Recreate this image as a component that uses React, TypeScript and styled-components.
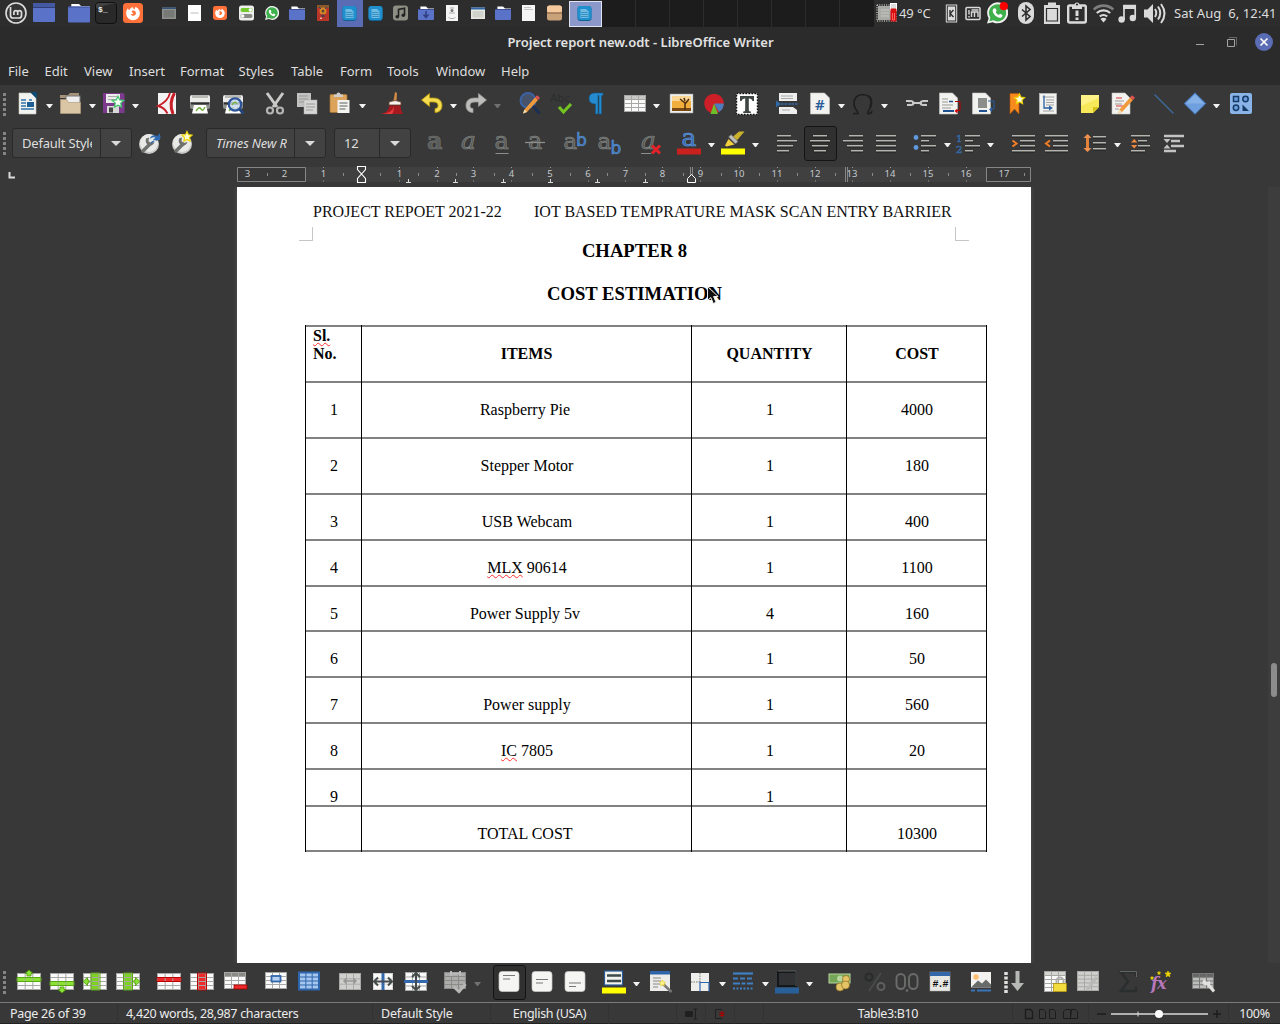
import React from 'react';
import styled, { createGlobalStyle } from 'styled-components';

const Global = createGlobalStyle`
  * { box-sizing: border-box; }
  body { margin: 0; background: #383838; overflow: hidden; }
`;

const ui = `"Noto Sans", "Open Sans", sans-serif`;

const Desktop = styled.div`
  width: 1280px;
  height: 1024px;
  display: flex;
  flex-direction: column;
  background: #383838;
  color: #dedede;
  font-family: ${ui};
  font-size: 13px;
  position: relative;
  overflow: hidden;
`;

/* ---------- desktop panel ---------- */

const Panel = styled.header`
  display: flex;
  height: 27px;
  flex: none;
  background: #2d2d2d;
  padding-left: 4px;
`;
const PanelIcon = styled.svg<{ $gap?: number }>`
  flex: none;
  display: block;
  height: 27px;
  margin-left: ${p => p.$gap ?? 0}px;
`;
const ActiveTask = styled.div`
  width: 26px;
  height: 27px;
  flex: none;
  background: #5a6db4;
  margin-left: 8px;
  padding-left: 5px;
`;
const FocusedTask = styled.div`
  width: 33px;
  height: 26px;
  flex: none;
  margin: 1px 0 0 7px;
  background: #8d98ca;
  border: 1px solid #dfe2f0;
  display: flex;
  padding-left: 7px;
  svg { margin-top: -2px; }
`;
const EmptyTasks = styled.div`
  display: flex;
  width: 272px;
  flex: none;
  background: #1c1c1c;
`;
const EmptyTask = styled.div`
  width: 34px;
  border-right: 1px solid #2c2c2c;
  &:last-child { border: 0; }
`;
const PanelText = styled.span<{ $gap: number; $w: number; $ls?: number }>`
  margin-left: ${p => p.$gap}px;
  width: ${p => p.$w}px;
  flex: none;
  line-height: 27px;
  font-size: 13px;
  letter-spacing: ${p => p.$ls ?? 0}px;
  white-space: pre;
`;

type PI = { w: number; gap?: number; children?: React.ReactNode };
const P = ({ w, gap, children }: PI) => (
  <PanelIcon $gap={gap} width={w} viewBox={`0 0 ${w} 27`}>{children}</PanelIcon>
);

const Folder = ({ w, h, gap, top, arrow }: { w: number; h: number; gap: number; top: number; arrow?: boolean }) => (
  <P w={w} gap={gap}>
    <path d={`M${w * 0.15} ${top + 4}v-3.5h${w * 0.35}l2 2h${w * 0.4}v3z`} fill="#fff" />
    <rect y={top + 3} width={w} height={h - 3} rx="1" fill="#5a72c8" />
    <rect y={top + 3} width={w} height="1" fill="#3c4f96" />
    {arrow && <path d={`M8 ${top + 5}v6M5.5 ${top + 8.5}l2.500 3 2.500-3`} stroke="#2f3f80" strokeWidth="1.500" fill="none" />}
  </P>
);
const Firefox = ({ s, gap }: { s: number; gap: number }) => (
  <P w={s} gap={gap}>
    <g transform={`translate(0 ${13 - s / 2}) scale(${s / 20})`}>
      <rect width="20" height="20" rx="3.500" fill="#ff7139" />
      <path d="M9 4.200c1.200.4 1.700 1.200 1.900 2.200 1.300-.4 1.500-1.500 1.300-2.600 2.800 1.200 4.700 3.400 4.700 6.500a6.900 6.900 0 0 1-13.800 0c0-2 .7-3.800 1.900-5 .2 1 .6 1.600 1.300 2 .6-1.400 1.400-2.400 2.700-3.100z" fill="#fff" />
      <path d="M9 7.800c-.6 1.300.2 2 1.500 2.200-.5 1.200-1.700 1.200-2.600.8.3 1.600 1.500 2.300 2.900 2 1.500-.3 2.300-1.500 2.100-3-.2-1.500-1.500-2.700-3.900-2z" fill="#ff7139" />
    </g>
  </P>
);
const WhatsApp = ({ s, gap, dot }: { s: number; gap: number; dot?: boolean }) => (
  <P w={s} gap={gap}>
    <g transform={`translate(0 ${13 - s / 2}) scale(${s / 20})`}>
      <path d="M0 20l1.600-5A10 10 0 1 1 5.500 18.700z" fill="#f2f2f2" />
      <path d="M2.200 17.800l1-3.400A8.200 8.200 0 1 1 6 17z" fill="#3fb14c" />
      <path d="M6.800 5.400l1.400.2 1 2.200-1 1.300c.7 1.400 1.700 2.200 3 2.800l1.200-1.200 2.300 1.100c.2 1.600-1 2.700-2.500 2.700-3.500-.4-6.500-3.600-6.800-6.600 0-1 .5-2 1.400-2.500z" fill="#fff" />
      {dot && <circle cx="16" cy="3.500" r="3.900" fill="#f00" />}
    </g>
  </P>
);
const WriterIcon = ({ gap }: { gap?: number }) => (
  <P w={15} gap={gap}>
    <rect x=".5" y="6" width="14" height="15" rx="3" fill="#14618f" />
    <rect x=".5" y="6" width="14" height="14" rx="3" fill="#1f8fce" />
    <path d="M3.500 9h5.500l2.500 2.500v6.500h-8z" fill="#6fbbe3" />
    <path d="M4 12.500h6.500M4 14.500h7M4 16.500h7" stroke="#2c87ba" strokeWidth=".8" />
  </P>
);
const Note = ({ w, gap, c, bg }: { w: number; gap: number; c: string; bg?: string }) => (
  <P w={w} gap={gap}>
    {bg ? (
      <>
        <rect y="5.500" width="15" height="15" rx="3" fill={bg} />
        <path d="M5.500 16.500V9.500l6-1.300v7" stroke={c} strokeWidth="1.600" fill="none" />
        <circle cx="4.300" cy="16.700" r="1.800" fill={c} /><circle cx="10.300" cy="15.300" r="1.800" fill={c} />
      </>
    ) : (
      <>
        <path d="M6 20V5.500h11.200V18" stroke={c} strokeWidth="1.700" fill="none" />
        <path d="M5.200 5h12.800v4H5.200z" fill={c} />
        <circle cx="3.600" cy="19.500" r="3.200" fill={c} /><circle cx="14.800" cy="18" r="3.200" fill={c} />
      </>
    )}
  </P>
);

const DesktopPanel = () => (
  <Panel>
    <P w={23}>
      <circle cx="12" cy="13" r="10" fill="#343434" stroke="#dcdcdc" strokeWidth="1.600" />
      <path d="M6.500 7v8.500a2.500 2.500 0 0 0 2.500 2.500h6a2.500 2.500 0 0 0 2.500-2.500V12a2 2 0 0 0-3.800 0v3M13.700 15v-3a2 2 0 0 0-3.800 0v3" stroke="#dcdcdc" strokeWidth="1.700" fill="none" />
    </P>
    <P w={22} gap={6}>
      <rect y="3" width="22" height="19" rx="1" fill="#5a72c8" /><rect y="3" width="22" height="4" fill="#4559a2" /><path d="M0 7.500h22" stroke="#2f3e78" />
    </P>
    <Folder w={22} h={19} gap={13} top={3.500} />
    <P w={22} gap={5}>
      <rect x=".5" y="2.500" width="21" height="21" rx="3.500" fill="#292929" stroke="#101010" />
      <path d="M1 8q10-3 20-5v-0H4Q1 3 1 6z" fill="#414141" />
      <text x="3" y="11.500" fontSize="8" fontWeight="700" fontFamily="Liberation Mono, monospace" fill="#eee">$_</text>
    </P>
    <Firefox s={20} gap={6} />
    <P w={14} gap={19}>
      <rect y="7.500" width="14" height="11.500" fill="#8f918e" /><rect x="1.500" y="10" width="11" height="7.500" fill="#777976" /><rect y="7.500" width="14" height="1.500" fill="#33557d" />
    </P>
    <P w={13} gap={12}><rect y="5" width="13" height="16" fill="#fff" /><path d="M2.500 13h8" stroke="#bbb" /></P>
    <Firefox s={14} gap={12} />
    <P w={15} gap={12}>
      <rect y="5.500" width="15" height="15" rx="2.500" fill="#eeeeec" />
      <rect x="1.500" y="8" width="12" height="4" rx="2" fill="#73c92d" /><circle cx="11.300" cy="10" r="1.700" fill="#fff" />
      <rect x="1.500" y="14" width="12" height="4" rx="2" fill="#878a85" /><circle cx="3.700" cy="16" r="1.700" fill="#fff" />
    </P>
    <WhatsApp s={14} gap={11} />
    <Folder w={16} h={14} gap={10} top={6} />
    <P w={12} gap={12}>
      <rect y="5" width="12" height="16" fill="#b93528" /><rect y="5" width="12" height="3" fill="#8b5a2b" /><circle cx="6" cy="11" r="3.500" fill="#d88726" /><circle cx="6" cy="11" r="1.500" fill="#5b4a33" /><path d="M2 7l2 2M10 7l-2 2M4 16h4M6 14v3" stroke="#3b3c62" /><rect x="3" y="17.500" width="2" height="1.500" fill="#f7b0a0" />
    </P>
    <ActiveTask><WriterIcon /></ActiveTask>
    <WriterIcon gap={5} />
    <Note w={15} gap={10} c="#222" bg="#8d8e84" />
    <Folder w={16} h={14} gap={10} top={6} arrow />
    <P w={12} gap={12}><rect y="5" width="12" height="16" fill="#f4f4f4" /><circle cx="6" cy="10.500" r="1.500" fill="#777" /><path d="M4 8h4M3 13h6M2.500 17l1.500 1.500h4L9.500 17" stroke="#aaa" fill="none" /></P>
    <P w={14} gap={13}><rect y="7.500" width="14" height="11.500" fill="#e8e9e5" /><rect y="7.500" width="14" height="2" fill="#2d65a5" /><rect x="1.500" y="11" width="11" height="6.500" fill="#cfd3cb" /></P>
    <Folder w={16} h={14} gap={10} top={6} />
    <P w={13} gap={11}><rect y="5" width="13" height="16" fill="#f6f6f6" /><path d="M2 7.500h7M2 9.500h9" stroke="#c5c5c5" /></P>
    <P w={15} gap={12}><rect y="5.500" width="15" height="15" rx="2.500" fill="#caa27a" /><rect y="5.500" width="15" height="7" rx="2.500" fill="#f3c99d" /><path d="M0 13h15" stroke="#7d5c3c" /></P>
    <FocusedTask><WriterIcon /></FocusedTask>
    <EmptyTasks>{Array.from({ length: 8 }, (_, i) => <EmptyTask key={i} />)}</EmptyTasks>
    <P w={22} gap={2}>
      <rect x="1" y="5" width="19" height="16" fill="none" stroke="#b9bab6" strokeDasharray="1 1.300" strokeWidth="1.500" />
      <rect x="2" y="6" width="16" height="14" fill="#a9aaa5" /><path d="M5 10h8M5 13h8M5 16h8" stroke="#c7c8c3" />
      <rect x="14.500" y="3.500" width="6" height="7" fill="#ddd" stroke="#fff" /><rect x="14.500" y="8.500" width="6" height="13" rx="1" fill="#d80f10" /><path d="M16.500 13v7h2v-7" stroke="#ff6262" fill="none" />
    </P>
    <PanelText $gap={1} $w={38} $ls={-0.1}>49 °C</PanelText>
    <P w={13} gap={8}><rect x=".8" y="4.500" width="11.400" height="18" fill="#dadada" /><rect x="2.300" y="6" width="8.400" height="15" fill="#dadada" stroke="#2d2d2d" /><path d="M5 10v7M8.500 10L5.200 13.500 8.500 17" stroke="#2d2d2d" strokeWidth="1.400" fill="none" /></P>
    <P w={16} gap={7}><rect x="1" y="7.500" width="14" height="12" rx="1" fill="none" stroke="#dadada" strokeWidth="1.500" /><path d="M4 10v4.500M4 16v1.500M6.500 17v-5h3v5M9.500 12h3.500v5M6.500 10h7" stroke="#dadada" strokeWidth="1.400" fill="none" /></P>
    <WhatsApp s={21} gap={6} dot />
    <P w={16} gap={10}><rect y="2" width="16" height="22" rx="8" fill="#dadada" /><path d="M4 9.500l8 7L8 20V6l4 3.500-8 7" stroke="#2d2d2d" strokeWidth="1.600" fill="none" /></P>
    <P w={18} gap={9}><path d="M5 2.500h8V5h4v19H1V5h4z" fill="#dadada" /><path d="M4 8.500h10M3.500 8.500h11v12.500h-11z" fill="none" stroke="#2d2d2d" strokeWidth="1.200" /></P>
    <P w={20} gap={6}><rect x="1.200" y="5.500" width="17.600" height="17" rx="1.500" fill="none" stroke="#dadada" strokeWidth="2.400" /><path d="M5 5v4h10V5h-2.500a2.500 2.500 0 0 0-5 0z" fill="#dadada" /><circle cx="10" cy="4.500" r="1.100" fill="#2d2d2d" /><path d="M10 10.500v5.500M10 17.500v2.500" stroke="#dadada" strokeWidth="3" /></P>
    <P w={21} gap={6}>
      <path d="M.8 9.500a14 14 0 0 1 19.400 0" stroke="#7d7d7d" strokeWidth="2.600" fill="none" />
      <path d="M3.800 13a9.800 9.800 0 0 1 13.400 0M6.800 16.500a5.600 5.600 0 0 1 7.400 0" stroke="#dadada" strokeWidth="2.200" fill="none" /><path d="M10.500 22.500l-3-3.400a4 4 0 0 1 6 0z" fill="#dadada" />
    </P>
    <Note w={19} gap={4} c="#dadada" />
    <P w={23} gap={7}><path d="M0 9.500h3.500L9 4v19l-5.500-5.500H0z" fill="#dadada" /><path d="M11 9q2.500 4 0 8M14 6.500q4.500 6.500 0 13M17 4q7 9.500 0 19" stroke="#dadada" strokeWidth="2" fill="none" /></P>
    <PanelText $gap={7} $w={106} $ls={0.08}>Sat Aug  6, 12:41</PanelText>
  </Panel>
);

/* ---------- title bar and menu ---------- */

const TitleBar = styled.div`
  height: 30px;
  flex: none;
  display: grid;
  grid-template-columns: 180px 1fr 180px;
  align-items: center;
  background: #2b2b2b;
`;
const Title = styled.h1`
  margin: -1px 0 0 1px;
  grid-column: 2;
  text-align: center;
  font-size: 13px;
  font-weight: 600;
  letter-spacing: 0;
  color: #e2e2e2;
`;
const WindowButtons = styled.div`
  display: flex;
  justify-content: flex-end;
  padding-right: 6px;
`;
const MenuBar = styled.nav`
  display: flex;
  height: 28px;
  flex: none;
  padding-left: 8px;
  background: #2b2b2b;
  line-height: 29px;
`;
const MenuItem = styled.span<{ $w: number }>`
  width: ${p => p.$w}px;
  white-space: nowrap;
`;
const menus: [string, number][] = [['File', 36.500], ['Edit', 39.500], ['View', 45], ['Insert', 51], ['Format', 58.500], ['Styles', 52.500], ['Table', 49], ['Form', 47], ['Tools', 49], ['Window', 65], ['Help', 40]];

/* ---------- toolbars ---------- */

const ToolbarRow = styled.div<{ $h: number; $lift?: number }>`
  display: flex;
  align-items: center;
  height: ${p => p.$h}px;
  padding-bottom: ${p => p.$lift ?? 0}px;
  flex: none;
  padding-left: 3px;
`;
const Grip = styled.div<{ $after: number }>`
  width: 3px;
  height: 23px;
  margin-right: ${p => p.$after}px;
  flex: none;
  background: repeating-linear-gradient(#858585 0 3px, transparent 3px 5px);
`;
const ToolButton = styled.div<{ $gap: number; $on?: boolean }>`
  width: 33px;
  height: 35px;
  flex: none;
  margin-left: ${p => p.$gap}px;
  display: grid;
  place-items: center;
  border-radius: 3px;
  background: ${p => (p.$on ? '#303030' : 'transparent')};
  border: ${p => (p.$on ? '1px solid #141414' : '0')};
  svg { display: block; overflow: visible; }
`;
const Caret = styled.i<{ $dim?: boolean }>`
  width: 7px;
  margin: 4px 0 0 2px;
  margin-right: 1px;
  flex: none;
  border: 3.500px solid transparent;
  border-top: 4.500px solid ${p => (p.$dim ? '#707070' : '#f2f2f2')};
  border-bottom: 0;
`;
const Combo = styled.div<{ $w: number; $gap: number; $italic?: boolean }>`
  display: grid;
  grid-template-columns: 1fr 31px;
  width: ${p => p.$w}px;
  height: 30px;
  flex: none;
  margin-left: ${p => p.$gap}px;
  background: #424242;
  border: 1px solid #292929;
  border-radius: 3px;
  font-style: ${p => (p.$italic ? 'italic' : 'normal')};
`;
const ComboText = styled.span<{ $w: number; $ls?: number }>`
  margin-left: 9px;
  width: ${p => p.$w}px;
  line-height: 28px;
  overflow: hidden;
  white-space: nowrap;
  letter-spacing: ${p => p.$ls ?? -0.2}px;
`;
const ComboArrow = styled.span`
  display: grid;
  place-items: center;
  border-left: 1px solid #292929;
  &::after {
    content: '';
    border: 5px solid transparent;
    border-top-color: #dadada;
    border-bottom: 0;
  }
`;

type TP = { gap?: number; on?: boolean; drop?: boolean; dim?: boolean; children?: React.ReactNode };
const Tool = ({ gap = 0, on, drop, dim, children }: TP) => (
  <>
    <ToolButton $gap={gap} $on={on}><svg width="24" height="24" viewBox="0 0 24 24">{children}</svg></ToolButton>
    {drop && <Caret $dim={dim} />}
  </>
);

const Sheet = ({ x = 4, y = 1, w = 17, h = 21, fill = '#f2f2f0' }) => (
  <path d={`M${x} ${y}h${w - 5}l5 5v${h - 5}h${-w}z`} fill={fill} stroke="#c8c8c4" strokeWidth=".6" />
);
const Letter = ({ ch = 'a', x = 3, y = 18, size = 24, c = '#555856', edge = '#8a8d8a', italic = false, bold = false, sans = false }) => (
  <text x={x} y={y} fontSize={size} fontFamily={sans ? 'DejaVu Sans, sans-serif' : 'DejaVu Serif, serif'} fontStyle={italic ? 'italic' : 'normal'} fontWeight={bold ? 700 : 400} fill={c} stroke={edge} strokeWidth=".6">{ch}</text>
);
/* paragraph lines: [x, width] for each row */
const Lines = ({ rows, y = 4, step = 5, c = '#b5b5b0' }: { rows: [number, number][]; y?: number; step?: number; c?: string }) => (
  <>
    {rows.map(([x, w], i) => (
      <g key={i}>
        <rect x={x} y={y + i * step} width={w} height="2" fill={c} />
        <rect x={x} y={y + 1.500 + i * step} width={w} height="1" fill="#1d1d1d" />
      </g>
    ))}
  </>
);
const Cells = ({ x = 0, y = 4, w = 24, h = 17, cols = 3, rows = 4, head = '', row = -1, col = -1, hl = '', bg = '#a7a7a5', cell = '#fafafa' }) => {
  const cw = (w - 1) / cols, ch = (h - 1) / rows;
  return (
    <>
      <rect x={x} y={y} width={w} height={h} fill={bg} />
      {Array.from({ length: rows * cols }, (_, i) => {
        const c = i % cols, r = Math.floor(i / cols);
        const fill = r === row || c === col ? hl : head && r === 0 ? head : cell;
        return <rect key={i} x={x + 1 + c * cw} y={y + 1 + r * ch} width={cw - 1} height={ch - 1} fill={fill} />;
      })}
    </>
  );
};

const Printer = () => (
  <>
    <path d="M2 5q0-2 2-2h16q2 0 2 2v7H2z" fill="#ececea" /><path d="M4 3h16v3H4z" fill="#b9bab6" /><path d="M2 10h20v5q0 2-2 2H4q-2 0-2-2z" fill="#8e908c" />
    <path d="M3 11.500h18" stroke="#303030" strokeWidth="2" />
    <path d="M6 13h12l2 8.500H4z" fill="#fff" /><path d="M8 19q3-5 5-2t4-2" stroke="#7ab648" strokeWidth="1.500" fill="none" />
  </>
);
const Scissors = () => (
  <>
    <path d="M4 1l10 14M20 1L10 15" stroke="#c9cac8" strokeWidth="3" />
    <circle cx="7" cy="18.500" r="3" stroke="#b5b6b3" strokeWidth="2.200" fill="none" /><circle cx="17" cy="18.500" r="3" stroke="#b5b6b3" strokeWidth="2.200" fill="none" />
  </>
);
const Pencil = ({ x = 0 }) => (
  <g transform={`translate(${x} 0)`}><path d="M5 21.500l1.500-4L17 5.500l3 2.500L9 20z" fill="#f09a3b" /><path d="M17 5.500l2-2.200 3 2.500-2 2.200z" fill="#e0524f" /><path d="M5 21.500l1.500-4L9 20z" fill="#f3dfb8" /></g>
);
const Wrench = () => (
  <>
    <circle cx="11" cy="13" r="10" fill="#c9cac7" /><circle cx="11" cy="12" r="9" fill="#e9eae7" />
    <path d="M5 20L12 13" stroke="#6f716e" strokeWidth="3.500" strokeLinecap="round" />
    <path d="M8 7.500q-1 4.500 2 6.500 5 1.500 6.500-3l-3.500 1-2.500-1.800.5-3.700z" fill="#6f716e" />
  </>
);
const Star = ({ x, y, s = 1, fill = '#fff6a0', stroke = '#edd400' }: { x: number; y: number; s?: number; fill?: string; stroke?: string }) => (
  <path transform={`translate(${x} ${y}) scale(${s})`} d="M0-6l1.800 3.800 4.200.5-3.100 2.900.8 4.200L0 3.400l-3.700 2 .8-4.200L-6-1.700l4.200-.5z" fill={fill} stroke={stroke} strokeWidth="1.300" />
);

const StandardBar = () => (
  <ToolbarRow $h={38}>
    <Grip $after={5} />
    <Tool drop><Sheet x={3} w={17} /><path d="M14 0h7v7z" fill="#0f4c73" /><path d="M5 8h5M5 11h5M5 14h5M5 17h13M13 8h3" stroke="#2f73a8" strokeWidth="1.500" /><rect x="11" y="10" width="7" height="5" fill="#1d5f94" /></Tool>
    <Tool drop><path d="M1 3h8l2-2h9v5H1z" fill="#a7937a" /><rect x="7" y="4" width="14" height="8" fill="#eee" stroke="#777" /><path d="M1.500 7.500h6l2 3h12v11h-20z" fill="#dac5a4" stroke="#b39e7d" strokeWidth=".7" /></Tool>
    <Tool drop><path d="M1 1h20l1.500 1.500V21H1z" fill="#7c3a8c" /><rect x="4" y="2" width="14" height="9" fill="#ececec" /><rect x="5" y="14" width="12" height="7" fill="#d8d8d8" /><path d="M6 4.500h9M6 7.500h9" stroke="#aaa" /><rect x="7" y="15.500" width="4" height="5" fill="#444" /><Star x={16} y={10} s={0.95} fill="#f2fff4" stroke="#41c46c" /></Tool>
    <Tool gap={10}><rect x="3" y="1" width="18" height="21" fill="#f3f3f3" /><path d="M15 1q-2 8.500-12 13 6.500 1.500 9.500 7.500" stroke="#c81f28" strokeWidth="1.800" fill="none" /><path d="M19.500 1q-6 10-1.500 21" stroke="#c81f28" strokeWidth="3" fill="none" /></Tool>
    <Tool><Printer /></Tool>
    <Tool><Printer /><circle cx="14" cy="12.500" r="6.200" fill="#c7d7ec" fillOpacity=".8" stroke="#2d549b" strokeWidth="2.200" /><path d="M18.500 17l4 4.500" stroke="#24467e" strokeWidth="2.800" /><path d="M11 13q3-5 5-1" stroke="#7ab648" strokeWidth="1.500" fill="none" /></Tool>
    <Tool gap={9}><Scissors /></Tool>
    <Tool><rect x="1" y="1" width="14" height="14" fill="#c2c2c1" /><path d="M3 4h9M3 7h9M3 10h9" stroke="#999" /><rect x="8" y="8" width="13" height="14" fill="#d6d6d5" stroke="#aaa" strokeWidth=".5" /><path d="M10 12h9M10 15h9M10 18h7" stroke="#9a9a9a" /></Tool>
    <Tool drop><rect x="1" y="2.500" width="17" height="18" rx="1" fill="#dca35b" stroke="#a8752f" strokeWidth=".7" /><path d="M5 5V2.500h2.500a2 2 0 0 1 4 0H14V5z" fill="#cfd0cd" /><path d="M8.500 8h12v13h-12z" fill="#f3f3f2" /><path d="M10.500 11h8M10.500 14h8M10.500 17h6" stroke="#8f918d" strokeWidth="1.300" /></Tool>
    <Tool gap={8}><path d="M15 0l2 1-.5 8h-3z" fill="#d38b43" /><path d="M9 10q6-3 12 0v3H9z" fill="#f2f2ef" stroke="#6b3b25" strokeWidth=".8" /><path d="M9.500 13.500h11q0 5 2.500 8.500H1q7-1 8.500-8.500z" fill="#a51a20" /><path d="M1 22q10 0 13-7 0 5-2 7z" fill="#e83c3c" /></Tool>
    <Tool gap={7} drop><path d="M1.500 8l8-6.500V6h4c5.500 0 8.500 3 8.500 7.500s-3 7-7 7v-4c2 0 3-1 3-3 0-2.500-2-3.500-5-3.500H9.500v4.500z" fill="#f5dc4e" stroke="#b79a10" strokeWidth=".8" /></Tool>
    <Tool gap={1} drop dim><path d="M22.500 8l-8-6.500V6h-4C5 6 2 9 2 13.500s3 7 7 7v-4c-2 0-3-1-3-3 0-2.500 2-3.500 5-3.500h3.500v4.500z" fill="#bdbdbb" stroke="#989896" strokeWidth=".8" /></Tool>
    <Tool gap={11}><circle cx="10" cy="8.500" r="7.500" fill="#46536b" stroke="#3a62a4" strokeWidth="2" /><path d="M15 14l6.500 7.500" stroke="#1d2f53" strokeWidth="3" /><Pencil /></Tool>
    <Tool><text x="-1" y="10" fontSize="11.500" fontFamily={ui} fill="#2c2f2e">Abc</text><path d="M8 15l4.500 5L20 12" stroke="#73c421" strokeWidth="3" fill="none" /></Tool>
    <Tool><path d="M11 1h8v2.500h-1.500V22H15V3.500h-1V22h-2.500V12Q5 12 5 6.500T11 1z" fill="#258bd1" stroke="#125687" strokeWidth=".6" /></Tool>
    <Tool gap={6} drop><Cells y={3} w={22} h={17} rows={4} head="#c7c8c5" x={1} /></Tool>
    <Tool gap={3}><rect x="1" y="2" width="23" height="19" fill="#ededeb" stroke="#9b9c99" strokeWidth=".5" /><rect x="3" y="4" width="19" height="15" fill="#f2ae3d" /><path d="M3 4h19v5H3z" fill="#fbd795" /><path d="M3 16h19v3H3z" fill="#7b4a14" /><path d="M16 18v-7l-5-4M16 12l4-5M16 9l-1-3" stroke="#4b2c0c" strokeWidth="1.500" fill="none" /></Tool>
    <Tool><circle cx="12" cy="11.500" r="9.800" fill="#cc1f27" /><path d="M12 11.500h9.800a9.800 9.800 0 0 1-5 8.600z" fill="#4c7cbc" /><path d="M12 11.500l4 10.500H8.500z" fill="#6cbf2b" /></Tool>
    <Tool><rect x="1.500" y="1.500" width="21" height="21" fill="#fff" stroke="#111" strokeWidth="1.500" strokeDasharray="1.500 1.500" /><path d="M5 4h14v5h-1.500q-.5-2.500-3-2.500h-.7V18q0 1.500 2 1.500V21H8.200v-1.500q2 0 2-1.500V6.500h-.7q-2.500 0-3 2.500H5z" fill="#3e4543" /></Tool>
    <Tool gap={7}><path d="M4 1h18v8H4zM4 15h14l4 3v4H4z" fill="#eee" /><path d="M6 4h12M6 6.500h12M7 18h8" stroke="#aaa" /><path d="M1 8.500l5 3.500-5 3.500z" fill="#2f69a8" /><path d="M6 12h17" stroke="#2f69a8" strokeWidth="1.600" strokeDasharray="2.500 1" /></Tool>
    <Tool drop><Sheet x={2.500} w={19} /><text x="7" y="17.500" fontSize="15" fontWeight="600" fontFamily={ui} fill="#265a96">#</text></Tool>
    <Tool drop><path d="M2 21.500h4.500q1 0 0-2Q2.500 15 3 10 4 3 11.500 2.500 20 3 20.500 10q.3 4.500-3.500 9.500-1 2 .5 2.200 3 0 3.500-2.700" stroke="#1d1f1e" strokeWidth="1.600" fill="none" /><path d="M18 4q4 5 1 11" stroke="#1d1f1e" strokeWidth="2" fill="none" /></Tool>
    <Tool gap={11}><path d="M1 9h5q2 0 3 2-1 2-3 2H2M23 9h-5q-2 0-3 2 1 2 3 2h4M7 11h10" stroke="#c9cac7" strokeWidth="2" fill="none" /><path d="M3 11h4M17 11h4" stroke="#555" /></Tool>
    <Tool><Sheet x={1.500} w={18} /><path d="M4 7h6M4 10h6M4 13h11M4 16h9" stroke="#999" /><path d="M5 19h11" stroke="#1f5190" strokeWidth="2" /><path d="M11 9.500h4" stroke="#1f5190" strokeWidth="1.500" /><path d="M17 9.500h5v9h-4" stroke="#b80000" fill="none" /><path d="M16.500 19l3-2.500v5z" fill="#d00000" /></Tool>
    <Tool><Sheet x={1.500} w={18} /><rect x="7" y="6" width="9" height="10" fill="#8c8e8a" /><path d="M8 19h8" stroke="#1f5190" strokeWidth="2" /><path d="M17 9h6v8h-3" stroke="#2a5fa0" fill="none" /><path d="M18 17.500l3-2.500v5z" fill="#2a5fa0" /></Tool>
    <Tool><path d="M6 1.500h9V22l-4.500-5L6 22z" fill="#f78b1e" stroke="#b75500" strokeWidth=".6" /><Star x={15.500} y={7} s={0.85} fill="#fffde0" /></Tool>
    <Tool><rect x="2.500" y="1.500" width="17" height="20.500" fill="#f2f2f0" stroke="#c8c8c4" strokeWidth=".6" /><path d="M5.500 5h12M9 8h8M9 10.500h8M9 13h8M6 19h11" stroke="#a0a1a0" /><path d="M7 3.500v12.500h7" stroke="#285f9e" strokeWidth="1.300" fill="none" /><path d="M12 13.500l4 2.500-4 2.500z" fill="#285f9e" /></Tool>
    <Tool gap={8}><path d="M3 3h18v12l-6 6H3z" fill="#f7e85a" /><path d="M15 21v-6h6z" fill="#d8c21c" /><path d="M3 3h18v3L3 14z" fill="#fff59a" opacity=".7" /></Tool>
    <Tool><Sheet x={1} w={18} /><path d="M5 6h6M5 14h7" stroke="#d33" /><path d="M4 9h9M4 12h7M4 17h4" stroke="#999" /><Pencil x={2} /></Tool>
    <Tool gap={8}><path d="M2.500 2.500L21.500 21.500" stroke="#3d6a9c" strokeWidth="1.200" /></Tool>
    <Tool gap={-2} drop><path d="M12 .8L22.800 11.500 12 22.300 1.200 11.500z" fill="#6ea0df" stroke="#3e6fb0" /><path d="M12 2.500L21 11.500H3z" fill="#94bcec" opacity=".6" /></Tool>
    <Tool gap={3}><rect x="1" y="1" width="22" height="21" rx="2" fill="#8ab4e8" /><rect x="4.500" y="4.500" width="5" height="5" fill="#6b9ddd" stroke="#153a66" strokeWidth="1.500" /><circle cx="16.500" cy="7" r="2.700" fill="#6b9ddd" stroke="#153a66" strokeWidth="1.500" /><circle cx="7" cy="15.800" r="2.700" fill="#6b9ddd" stroke="#153a66" strokeWidth="1.500" /><path d="M13.500 12.500v6.500h6.500z" fill="#153a66" /></Tool>
  </ToolbarRow>
);

const FormattingBar = () => (
  <ToolbarRow $h={40}>
    <Grip $after={6} />
    <Combo $w={120} $gap={0}><ComboText $w={70}>Default Style</ComboText><ComboArrow /></Combo>
    <Tool gap={1}><Wrench /><path d="M11.500 8q2-5.500 8-3l2.500-3v7h-7l2.500-2.500q-3-1-6 1.500zM23 5q-1 6-7.500 4.500L13 11v2" fill="#2f69b0" /></Tool>
    <Tool><Wrench /><Star x={16} y={5.500} s={0.85} fill="#fffbd0" /></Tool>
    <Combo $w={120} $gap={7} $italic><ComboText $w={71} $ls={-0.15}>Times New Roman</ComboText><ComboArrow /></Combo>
    <Combo $w={77} $gap={8}><ComboText $w={30}>12</ComboText><ComboArrow /></Combo>
    <Tool gap={8.500}><Letter bold c="#5a5c5a" edge="#747774" x={3} size={24} /></Tool>
    <Tool><Letter italic x={4} size={25} /></Tool>
    <Tool><Letter x={4.500} size={24} /><path d="M5.500 22.500h13" stroke="#8b8e8b" /></Tool>
    <Tool><Letter x={5} size={24} /><path d="M2 11.500h20" stroke="#8b8e8b" strokeWidth="1.300" /></Tool>
    <Tool gap={7}><Letter x={0.500} size={23} /><Letter ch="b" sans x={13} y={15} c="#3a76bd" edge="#5d94d6" size={17} /></Tool>
    <Tool gap={1}><Letter x={0.500} size={23} /><Letter ch="b" sans x={13.500} y={22.500} c="#3a76bd" edge="#5d94d6" size={17} /></Tool>
    <Tool gap={10}><Letter italic x={1} size={25} /><path d="M1 22.500h10" stroke="#8b8e8b" /><path d="M12 14.500l8 8M20 14.500l-8 8" stroke="#e5222a" strokeWidth="3" /></Tool>
    <Tool gap={4} drop><Letter x={4.500} y={14.500} size={25} c="#3468b0" edge="#6aa0e4" /><rect y="17.500" width="24" height="6" fill="#c9211e" /></Tool>
    <Tool gap={1} drop><rect y="17.500" width="24" height="6" fill="#ff0" /><path d="M11 6.500L18 .5h5.500L15 10.500z" fill="#c9b12c" /><path d="M10 3.500l7 7-2.500 2.500-7-7z" fill="#bfc0bd" stroke="#555" strokeWidth=".6" /><path d="M7.500 8l6 5.500-8 2-1.500-1z" fill="#f2cf3c" /></Tool>
    <Tool gap={11}><Lines rows={[[2, 14], [2, 20], [2, 16], [2, 12]]} /></Tool>
    <Tool on><Lines rows={[[5, 14], [2, 20], [4, 16], [6, 12]]} /></Tool>
    <Tool><Lines rows={[[8, 14], [2, 20], [6, 16], [10, 12]]} /></Tool>
    <Tool><Lines rows={[[2, 20], [2, 20], [2, 20], [2, 20]]} /></Tool>
    <Tool gap={6} drop><Lines rows={[[8, 15], [8, 8], [8, 15], [8, 8]]} /><circle cx="3" cy="6.500" r="2.400" fill="#5f9ae0" /><circle cx="3" cy="16.500" r="2.400" fill="#5f9ae0" /></Tool>
    <Tool drop><Lines rows={[[9, 15], [9, 8], [9, 15], [9, 8]]} /><Letter ch="1" x={0} y={11} size={10} c="#3367a5" edge="#3367a5" /><Letter ch="2" x={0} y={22} size={10} c="#3367a5" edge="#3367a5" /></Tool>
    <Tool gap={12}><Lines rows={[[1, 23], [9, 15], [9, 15], [1, 23]]} /><path d="M1.500 9.500l4 3-4 3" stroke="#f17d24" strokeWidth="2" fill="none" /></Tool>
    <Tool><Lines rows={[[1, 23], [9, 15], [9, 15], [1, 23]]} /><path d="M6 9.500l-4 3 4 3" stroke="#f17d24" strokeWidth="2" fill="none" /></Tool>
    <Tool gap={6} drop><Lines rows={[[10, 13], [10, 13], [10, 13]]} y={5} step={6} /><path d="M4.500 4v16" stroke="#e4813a" strokeWidth="3" /><path d="M.5 7l4-4 4 4zM.5 17l4 4 4-4z" fill="#ef9250" /></Tool>
    <Tool gap={2}><Lines rows={[[3, 19], [10, 9], [10, 12], [3, 14]]} /><path d="M3 11.500l3.200-3.500 3.200 3.500zM3 14l3.200 3.500L9.400 14z" fill="#ef8a3d" /></Tool>
    <Tool gap={1}><path d="M2 5h20M9 10h9M9 15h13M2 20h12" stroke="#c3c3c3" strokeWidth="2.400" /><path d="M1.500 8h7l-3.500 4zM1.500 17.500h7L5 13.500z" fill="#c3c3c3" /></Tool>
  </ToolbarRow>
);

/* ---------- ruler ---------- */

const RulerRow = styled.div`
  height: 24px;
  flex: none;
  display: flex;
  justify-content: flex-start;
  padding-left: 7px;
  svg { display: block; flex: none; }
`;
const Ruler = styled.svg`margin-left: 221px;`;

const numbers: [string, number][] = [['3', 247.500], ['2', 284.500], ['1', 323.500], ['1', 399.500], ['2', 437], ['3', 473.500], ['4', 511.500], ['5', 550], ['6', 588], ['7', 625.500], ['8', 662.500], ['9', 700.500], ['10', 739], ['11', 777], ['12', 815], ['13', 852], ['14', 890], ['15', 928], ['16', 966], ['17', 1004]];
const tabs = [408.500, 455.500, 503.500, 550.500, 597.500, 645.500];
const RulerStrip = () => (
  <RulerRow>
    <svg width="8" height="24" viewBox="0 0 8 24"><path d="M2.500 9v5.500H8" stroke="#dcdcdc" strokeWidth="2" fill="none" /></svg>
    <Ruler width="798" height="24" viewBox="236 163 798 24">
      <rect x="237" y="167" width="793" height="15" fill="#404040" />
      <path d="M237.500 167.500H305.500V181.500H237.500zM986.500 167.500H1030.500V181.500H986.500z" fill="#383838" stroke="#858585" />
      {numbers.map(([n, x], i) => <text key={i} x={x} y="177" fontSize="9.500" textAnchor="middle" fontFamily={ui} fill="#c4c8cc">{n}</text>)}
      {Array.from({ length: 21 }, (_, i) => <path key={i} d={`M${Math.round(266.800 + i * 37.850) + 0.5} 173v3`} stroke="#8a8a8a" />)}
      {numbers.slice(2, 19).map(([, x], i) => <path key={i} d={`M${Math.floor(x) + 0.5} 167v1M${Math.floor(x) + 0.5} 180.500v1`} stroke="#9a9a9a" />)}
      {tabs.map(x => <path key={x} d={`M${x} 179v3M${x - 2.500} 182.500h5`} stroke="#dadada" fill="none" />)}
      <path d="M357.500 166.500h8v3l-8 9v4h8v-4l-8-9z" fill="#404040" stroke="#fff" strokeWidth="1.100" />
      <path d="M690.500 167v8M692.500 167v8M845.500 167v15M847.500 167v15" stroke="#858585" />
      <path d="M687.500 182.500v-4l4-4 4 4v4z" fill="#404040" stroke="#fff" />
    </Ruler>
  </RulerRow>
);

/* ---------- document ---------- */

const Canvas = styled.main`
  height: 776px;
  flex: none;
  display: flex;
  background: #383838;
`;
const Page = styled.article`
  width: 794px;
  height: 776px;
  margin-left: 237px;
  background: #fff;
  color: #000;
  box-shadow: 0 0 4px 1px #4c4c4c;
  clip-path: inset(0 -6px 0 -6px);
  font: 16px/18px "Liberation Serif", "Times New Roman", serif;
`;
const RunningHead = styled.div`
  display: flex;
  padding: 16px 0 0 76px;
  height: 40px;
  white-space: nowrap;
  color: #101010;
`;
const HeadLeft = styled.span`width: 221px;`;
const HeadRight = styled.span`letter-spacing: 0.005px;`;
const Corners = styled.div`
  display: flex;
  justify-content: space-between;
  margin: 0 62px;
  height: 14px;
`;
const Corner = styled.i<{ $left?: boolean }>`
  width: 14px;
  height: 14px;
  border: 0 solid #c6c6c6;
  border-bottom-width: 1px;
  border-right-width: ${p => (p.$left ? 1 : 0)}px;
  border-left-width: ${p => (p.$left ? 0 : 1)}px;
`;
const Heading = styled.h2<{ $gap: number }>`
  margin: ${p => p.$gap}px 0 0 1px;
  font-size: 18.670px;
  line-height: 20px;
  text-align: center;
`;
const Table = styled.div`
  width: 682px;
  margin: 21px 0 0 68px;
`;
const rule = 'linear-gradient(#828282, #828282)';
const Row = styled.div<{ $h: number; $head?: boolean; $last?: boolean }>`
  display: grid;
  grid-template-columns: 56px 330px 155px 141px;
  height: ${p => p.$h}px;
  text-align: center;
  font-weight: ${p => (p.$head ? 700 : 400)};
  background: ${rule} top / 100% 2px no-repeat${p => (p.$last ? `, ${rule} bottom / 100% 2px no-repeat` : '')};
`;
const Cell = styled.div<{ $stack?: boolean; $left?: number; $right?: number }>`
  border-left: 1px solid #000;
  padding-top: ${p => (p.$stack ? 2 : 20)}px;
  padding-left: ${p => (p.$stack ? 7 : p.$left ?? 1)}px;
  padding-right: ${p => p.$right ?? 0}px;
  text-align: ${p => (p.$stack ? 'left' : 'center')};
  white-space: pre-line;
  &:last-child { border-right: 1px solid #000; }
`;
const Misspelt = styled.span`
  text-decoration: underline wavy #ff3030 1px;
  text-decoration-skip-ink: none;
  text-underline-offset: 1px;
`;
const rows: [number, string, React.ReactNode, string, string, number][] = [
  [56, '1', 'Raspberry Pie', '1', '4000', 4],
  [56, '2', 'Stepper Motor', '1', '180', 0],
  [46, '3', 'USB Webcam', '1', '400', 0],
  [46, '4', <><Misspelt>MLX</Misspelt> 90614</>, '1', '1100', 0],
  [45, '5', 'Power Supply 5v', '4', '160', 4],
  [46, '6', '', '1', '50', 0],
  [46, '7', 'Power supply', '1', '560', 0],
  [46, '8', <><Misspelt>IC</Misspelt> 7805</>, '1', '20', 0],
  [37, '9', '', '1', '', 0],
  [47, '', 'TOTAL COST', '', '10300', 4],
];
const Scrollbar = styled.div`
  width: 12px;
  margin-left: auto;
  background: #3d3d3d;
  padding: 476px 3px 0;
`;
const Thumb = styled.div`
  height: 34px;
  width: 6px;
  border-radius: 3px;
  background: #8c8c8c;
`;
const Pointer = styled.svg`
  position: absolute;
  left: 706px;
  top: 285px;
`;

/* ---------- table toolbar and status bar ---------- */

const Tip = ({ d }: { d: string }) => <path d={d} fill="#8ae234" stroke="#4e9a06" strokeWidth=".8" />;
const CardIcon = ({ y }: { y: number }) => (
  <>
    <rect x="2" y="1.500" width="20" height="20" rx="3" fill="#f5f5f3" stroke="#c9c9c6" strokeWidth=".7" />
    <path d={`M6 ${y}h12M6 ${y + 3.500}h7`} stroke="#777" strokeWidth="1.100" />
  </>
);
const TableBar = () => (
  <ToolbarRow $h={39} $lift={1}>
    <Grip $after={6.500} />
    <Tool><Cells row={1} hl="#8ae234" y={3} h={17} /><path d="M0 7.500h24v4H0z" fill="none" stroke="#5aa80f" /><Tip d="M10 6V3.500H8L12 0l4 3.500h-2V6z" /></Tool>
    <Tool><Cells row={2} hl="#8ae234" y={3} h={17} /><path d="M0 11.500h24v4H0z" fill="none" stroke="#5aa80f" /><Tip d="M10 17v2.500H8L12 23l4-3.500h-2V17z" /></Tool>
    <Tool><Cells col={1} hl="#7ed321" y={3} h={17} /><path d="M8 3h9v17H8z" fill="none" stroke="#5aa80f" /><Tip d="M6 10H4.500V7.500L0 11.500l4.500 4V13H6z" /></Tool>
    <Tool><Cells col={1} hl="#7ed321" y={3} h={17} /><path d="M7.500 3h9v17h-9z" fill="none" stroke="#5aa80f" /><Tip d="M18 10h1.500V7.500l4.500 4-4.500 4V13H18z" /></Tool>
    <Tool gap={8}><Cells row={1} hl="#ef2929" y={3} h={17} /><path d="M0 7.500h24v4H0z" fill="none" stroke="#b00" /></Tool>
    <Tool><Cells col={1} hl="#ef2929" y={3} h={17} /><path d="M7.500 3h9v17h-9z" fill="none" stroke="#b00" /></Tool>
    <Tool><Cells y={2} w={22} h={17} x={1} head="#888a85" /><rect x="11" y="15" width="13" height="4" fill="#ef2929" stroke="#a40000" strokeWidth=".8" /></Tool>
    <Tool gap={8}><Cells y={2} w={22} h={17} x={1} /><rect x="7.500" y="6" width="9" height="5.500" fill="#b5d0f0" stroke="#2f66ad" strokeWidth="1.800" /></Tool>
    <Tool><rect x="1" y="1.500" width="22" height="19" fill="#2e66ad" /><Cells y={2.500} w={20} h={17} x={2} bg="#2e66ad" cell="#a5c6ee" /></Tool>
    <Tool gap={8}><Cells y={3} w={22} h={17} x={1} rows={3} bg="#a9a9a7" cell="#cfcfcd" /><path d="M6 11h12M8.500 8.500L6 11l2.500 2.500M15.500 8.500L18 11l-2.500 2.500" stroke="#979795" strokeWidth="1.500" fill="none" /></Tool>
    <Tool><Cells y={3} w={20} h={17} x={2} cols={2} rows={3} bg="#d5d5d3" /><path d="M12 3v17" stroke="#3569ad" strokeWidth="3" /><path d="M3 11.500h18M7 7.500l-4 4 4 4M17 7.500l4 4-4 4" stroke="#454b4a" strokeWidth="2" fill="none" /></Tool>
    <Tool><Cells y={2} w={22} h={19} x={1} rows={4} /><path d="M0 11.500h24" stroke="#3569ad" strokeWidth="3" /><path d="M12 3v17M8 7l4-4 4 4M8 16l4 4 4-4" stroke="#454b4a" strokeWidth="2" fill="none" /></Tool>
    <Tool gap={6} drop dim><Cells y={2} w={22} h={17} x={1} bg="#8a8a88" cell="#acacaa" rows={4} /><path d="M8 1v5M17 1v5M8 3.500h9" stroke="#bbb" strokeWidth="2" /><path d="M11 17l5 4.500L22.500 14" stroke="#b8b8b6" strokeWidth="3" fill="none" /></Tool>
    <Tool gap={11} on><CardIcon y={5.500} /></Tool>
    <Tool><CardIcon y={9.500} /></Tool>
    <Tool><CardIcon y={13} /></Tool>
    <Tool gap={6} drop><rect x="2.500" y="1" width="18" height="14" fill="#f2f2ef" stroke="#285a99" strokeWidth="1.200" /><path d="M5 5.500h14M5 11h14" stroke="#3c4a49" strokeWidth="2.500" /><rect y="17.500" width="24" height="6" fill="#ff0" /></Tool>
    <Tool gap={4}><rect x="1" y="1" width="20" height="20" fill="#ececea" /><rect x="1" y="1" width="20" height="3.500" fill="#2d65a8" /><path d="M4 8h8M4 11h8M4 14h7M4 17h5" stroke="#888" /><path d="M13 13l9.500 9" stroke="#777" strokeWidth="2.500" /><Star x={13.500} y={13} s={0.5} /></Tool>
    <Tool gap={6} drop><rect x="3" y="3" width="18" height="18" fill="#eeeeec" /><path d="M12 3v9M3 12h9" stroke="#777" strokeDasharray="1.500 1" /><path d="M12 21.500v-9h9M21 12v9.500" fill="none" stroke="#2e66ad" strokeWidth="1.200" /></Tool>
    <Tool drop><path d="M2 3.500h20" stroke="#3f7fc4" strokeWidth="2.200" /><path d="M2 8.500h20" stroke="#3f7fc4" strokeWidth="2" strokeDasharray="5 2" /><path d="M2 13.500h20" stroke="#3f7fc4" strokeWidth="2" strokeDasharray="7 1.500 4 1.500" /><path d="M2 18.500h20" stroke="#3f7fc4" strokeWidth="1.800" strokeDasharray="2 1.500" /></Tool>
    <Tool gap={1} drop><rect x="3" y="2" width="18" height="14" fill="#303233" stroke="#15181a" strokeWidth="2" /><path d="M3 1h18v15" stroke="#595c5c" fill="none" /><rect y="17.500" width="24" height="6" fill="#2a6099" /></Tool>
    <Tool gap={10}><rect x="1" y="4" width="21" height="9" fill="#75a557" stroke="#b7d79e" /><circle cx="12" cy="8.500" r="3" fill="#b7d79e" /><g fill="#e4c467" stroke="#92701b" strokeWidth=".7"><circle cx="18" cy="9" r="3.500" /><circle cx="12" cy="17" r="4" /><circle cx="17.500" cy="15" r="4" /></g></Tool>
    <Tool gap={2}><circle cx="6" cy="7" r="3.500" fill="none" stroke="#282b2a" strokeWidth="2" /><circle cx="18" cy="16.500" r="3.500" fill="none" stroke="#5d605e" strokeWidth="2" /><path d="M18 3L6 21" stroke="#484a48" strokeWidth="2" /></Tool>
    <Tool gap={-1}><g fill="none" stroke="#6b6d6b" strokeWidth="1.900"><rect x="1.500" y="4" width="8.500" height="15" rx="4.250" /><rect x="14" y="4" width="8.500" height="15" rx="4.250" /></g><circle cx="12" cy="20.500" r="1.300" fill="#6b6d6b" /></Tool>
    <Tool><rect x="2" y="2" width="20" height="19" fill="#e7e7e4" stroke="#aaa" strokeWidth=".5" /><rect x="2" y="2" width="20" height="4" fill="#3568aa" /><text x="4.500" y="16.500" fontSize="10" fontWeight="700" fontFamily="Liberation Mono, monospace" letterSpacing="-1" fill="#111">#.#</text></Tool>
    <Tool gap={8}><rect x="2" y="2" width="20" height="15.500" fill="#f2f2f0" /><circle cx="7" cy="7" r="2.700" fill="#ffbe6f" /><path d="M2 17.500l7-7 4 3 4-4 5 5v3z" fill="#686b69" /><path d="M2 20.500h4M8 20.500h14" stroke="#3a74b8" strokeWidth="1.800" /></Tool>
    <Tool><path d="M4 2v21" stroke="#e0e0de" strokeWidth="3.500" strokeDasharray="3 1.500" /><path d="M13.500 1h4v12h4.500l-6.500 8L9 13h4.500z" fill="#b7b9b6" /></Tool>
    <Tool gap={8}><Cells y={1} w={22} h={21} x={1} rows={5} head="#d3d7cf" /><path d="M13.500 14v-3a3.500 3.500 0 0 1 7 0v3" stroke="#b0b0ad" strokeWidth="2" fill="none" /><rect x="10.500" y="13.500" width="13" height="8" fill="#f2dc3f" stroke="#a88a00" strokeWidth=".7" /></Tool>
    <Tool><Cells y={1} w={22} h={20} x={1} rows={5} bg="#a8a8a6" cell="#cfcfcd" /><path d="M11 20L21 7" stroke="#b9b9b7" strokeWidth="3" /></Tool>
    <Tool gap={7}><path d="M20 6V2H5l7 9.500L5 21h15v-4" stroke="#2a2e2f" strokeWidth="2.400" fill="none" /><path d="M20.500 7V1.500H4" stroke="#626664" fill="none" /></Tool>
    <Tool gap={1}><text x="1" y="19" fontSize="16" fontStyle="italic" fontWeight="700" fontFamily="DejaVu Serif, serif" fill="#b877bd" letterSpacing="-1">fx</text><Star x={18} y={4} s={0.5} fill="#edd400" /><Star x={9} y={3} s={0.3} fill="#edd400" /><Star x={2} y={8} s={0.3} fill="#edd400" /></Tool>
    <Tool gap={8}><Cells y={3} w={22} h={16} x={1} rows={4} bg="#777" cell="#bcbebb" head="#666" /><path d="M16 13l7 8.500" stroke="#e1e1df" strokeWidth="3" /><path d="M13 9q-3 4 0 6 4 1 6-1v-3l-3 1-1.500-1.500z" fill="#e1e1df" /></Tool>
  </ToolbarRow>
);

const StatusBar = styled.footer`
  display: grid;
  grid-template-columns: 118px 255px 118px 118px 68px 29px 29px 29px 249px 76px 140px 1fr;
  height: 22px;
  flex: none;
  border-top: 1px solid #7c7c7c;
  border-bottom: 1px solid #222;
  line-height: 21px;
  font-size: 12.500px;
  color: #ececec;
`;
const Status = styled.span<{ $align?: string; $pad?: number; $ls?: number }>`
  display: flex;
  align-items: center;
  justify-content: ${p => p.$align ?? 'flex-start'};
  padding-left: ${p => p.$pad ?? 0}px;
  letter-spacing: ${p => p.$ls ?? -0.3}px;
  white-space: nowrap;
  border-right: 1px solid #323232;
  margin: 0;
  &:last-child { border: 0; }
`;

export default function App() {
  return (
    <Desktop>
      <Global />
      <DesktopPanel />
      <TitleBar>
        <Title>Project report new.odt - LibreOffice Writer</Title>
        <WindowButtons>
          <svg width="80" height="20" viewBox="0 0 80 20">
            <path d="M2 12.500h8" stroke="#a5a5a5" /><path d="M33.500 7.500h7v7h-7z" stroke="#a5a5a5" fill="none" /><path d="M35 5.500h7.500v8" stroke="#666" fill="none" />
            <circle cx="70" cy="10" r="9" fill="#5a6db4" /><path d="M66.500 6.500l7 7M73.500 6.500l-7 7" stroke="#fff" strokeWidth="1.700" />
          </svg>
        </WindowButtons>
      </TitleBar>
      <MenuBar>{menus.map(([m, w]) => <MenuItem key={m} $w={w}>{m}</MenuItem>)}</MenuBar>
      <StandardBar />
      <FormattingBar />
      <RulerStrip />
      <Canvas>
        <Page>
          <RunningHead>
            <HeadLeft>PROJECT REPOET 2021-22</HeadLeft>
            <HeadRight>IOT BASED TEMPRATURE MASK SCAN ENTRY BARRIER</HeadRight>
          </RunningHead>
          <Corners><Corner $left /><Corner /></Corners>
          <Heading $gap={0}>CHAPTER 8</Heading>
          <Heading $gap={23}>COST ESTIMATION</Heading>
          <Table>
            <Row $h={56} $head>
              <Cell $stack><Misspelt>Sl.</Misspelt>{'\n'}No.</Cell>
              <Cell $left={0}>ITEMS</Cell>
              <Cell>QUANTITY</Cell>
              <Cell>COST</Cell>
            </Row>
            {rows.map(([h, no, item, qty, cost, right], i) => (
              <Row key={i} $h={h} $last={i === rows.length - 1}>
                <Cell>{no}</Cell><Cell $right={right}>{item}</Cell><Cell $left={2}>{qty}</Cell><Cell>{cost}</Cell>
              </Row>
            ))}
          </Table>
        </Page>
        <Scrollbar><Thumb /></Scrollbar>
      </Canvas>
      <TableBar />
      <StatusBar>
        <Status $pad={10}>Page 26 of 39</Status>
        <Status $pad={8}>4,420 words, 28,987 characters</Status>
        <Status $pad={8} $ls={-0.2}>Default Style</Status>
        <Status $align="center">English (USA)</Status>
        <Status />
        <Status $align="center"><svg width="14" height="12"><rect x="1" y="3" width="8" height="6" fill="#202020" /><path d="M9.500 1h4M11.500 1v10M9.500 11h4" stroke="#202020" /></svg></Status>
        <Status $align="center"><svg width="14" height="12"><path d="M9 1.500H2.500v9H9" stroke="#202020" fill="none" /><path d="M9 3v6M6.500 4.500l5 3M11.500 4.500l-5 3" stroke="#a00" strokeWidth="1.200" /></svg></Status>
        <Status />
        <Status $align="center" $ls={-0.35}>Table3:B10</Status>
        <Status $align="center"><svg width="56" height="12" fill="none" stroke="#1c1c1c"><path d="M2.500 1.500h5l2 2v7h-7z" strokeWidth="1.300" /><path d="M16.500 1.500h4l2 2v7h-6zM26.500 1.500h4l2 2v7h-6zM40.500 3.500l2-2h5v9h-7zM48.500 1.500h4l2 2v7h-7z" /></svg></Status>
        <Status $align="center"><svg width="126" height="12"><path d="M1 6h9M117 6h8M121 2v8" stroke="#1c1c1c" strokeWidth="1.500" /><path d="M15 6h97" stroke="#dadada" strokeWidth="1.300" /><path d="M42 3.500v5" stroke="#dadada" /><circle cx="63" cy="6" r="4" fill="#fff" /></svg></Status>
        <Status $align="center">100%</Status>
      </StatusBar>
      <Pointer width="16" height="22" viewBox="0 0 16 22"><path d="M1.500 1.500v14l3.300-3 2.500 6 2.800-1.200-2.500-5.800h4.600z" fill="#111" stroke="#eee" /></Pointer>
    </Desktop>
  );
}
